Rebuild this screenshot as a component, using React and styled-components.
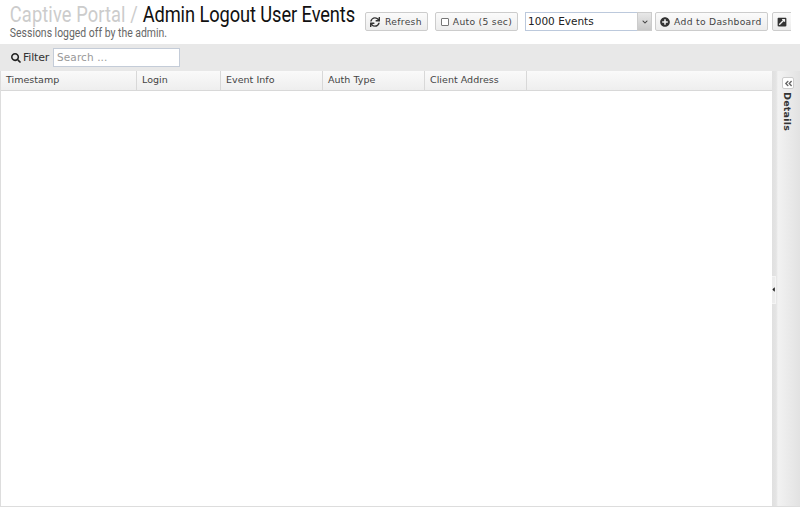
import React from "react";
import styled, { createGlobalStyle } from "styled-components";
import { FaSearch, FaSync, FaPlusCircle, FaExternalLinkSquareAlt, FaAngleDoubleLeft, FaCaretLeft, FaChevronDown } from "react-icons/fa";

const Global = createGlobalStyle`
  html, body { margin: 0; padding: 0; height: 100%; overflow: hidden; background: #fff; }
  #root { height: 100%; }
  * { box-sizing: border-box; }
`;
const Page = styled.div`
  width: 800px; height: 507px; display: flex; flex-direction: column;
  font-family: "DejaVu Sans", sans-serif; font-size: 10px; color: #333;
`;
const Header = styled.header`
  height: 44px; display: flex; justify-content: space-between; align-items: flex-start;
  padding: 0 9px 0 9px; background: #fff; flex: none;
`;
const TitleBlock = styled.div`
  display: flex; flex-direction: column; padding-top: 3px; white-space: nowrap;
`;
const Title = styled.h1`
  margin: 0; padding-left: 1px; font: 400 22px/23px "Roboto", sans-serif; color: #111; letter-spacing: -.1px;
  transform: scaleX(.83); transform-origin: left center; width: 346px;
`;
const Crumb = styled.span` color: #ccc; letter-spacing: .14px; `;
const Subtitle = styled.div`
  font: 400 12px/14px "Roboto", sans-serif; color: #666; margin-top: 0; padding-left: 1px;
  transform: scaleX(.87); transform-origin: left center;
`;
const Actions = styled.div`
  display: flex; align-items: center; margin-top: 12px; width: 426px; overflow: hidden; gap: 7px;
`;
const Button = styled.button`
  height: 19px; padding: 0 5px 0 4px; flex: none; display: inline-flex; align-items: center; gap: ${p => p.$gap || 5}px;
  background: linear-gradient(#fbfbfb, #ececec); border: 1px solid #ccc; border-radius: 2px;
  font: 400 9.2px "DejaVu Sans", sans-serif; letter-spacing: .3px; color: #444; white-space: nowrap;
  svg { font-size: 10px; color: #333; flex: none; }
`;
const IconButton = styled(Button)`
  margin-left: -3px; width: 24px;
`;
const Check = styled.span`
  width: 8px; height: 8px; margin-left: 1px; border: 1px solid #777; border-radius: 1px; background: #fff; flex: none;
`;
const Combo = styled.div`
  display: flex; height: 19px; flex: none; margin-right: -4px;
`;
const ComboInput = styled.div`
  width: 112px; border: 1px solid #bcc9dc; border-right: none; background: #fff;
  font: 400 10.5px/17px "DejaVu Sans", sans-serif; color: #222; padding-left: 2px;
`;
const ComboArrow = styled.div`
  width: 15px; background: linear-gradient(#e8e8e8, #c8c8c8); border: 1px solid #ccc;
  display: flex; align-items: center; justify-content: center;
  svg { font-size: 6px; color: #444; }
`;
const Toolbar = styled.div`
  height: 27px; flex: none; background: #e8e8e8; display: flex; align-items: center; padding: 0 0 0 11px; gap: 4px;
`;
const FilterLabel = styled.label`
  display: flex; align-items: center; gap: 2px; font: 400 11px "DejaVu Sans", sans-serif; color: #333;
  letter-spacing: -.2px;
  svg { font-size: 10px; color: #222; }
`;
const Search = styled.div`
  width: 127px; height: 19px; background: #fff; border: 1px solid #c4ccd8; padding-left: 3px;
  font: 400 10.5px/17px "DejaVu Sans", sans-serif; letter-spacing: .1px; color: #999;
`;
const Body = styled.div`
  flex: 1; display: flex; min-height: 0; border-bottom: 1px solid #ddd; border-left: 1px solid #ddd;
`;
const Grid = styled.div`
  flex: 1; min-width: 0; display: flex; flex-direction: column;
`;
const GridHead = styled.div`
  height: 20px; display: flex; flex: none; background: linear-gradient(#fafafa, #eeeeee);
  border-bottom: 1px solid #d8d8d8;
`;
const Col = styled.div`
  width: ${p => p.$w}px; flex: none; border-right: 1px solid #d8d8d8; padding-left: 5px;
  font: 400 9.5px/18px "DejaVu Sans", sans-serif; letter-spacing: .03px; color: #444;
`;
const Splitter = styled.div`
  width: 6px; flex: none; background: linear-gradient(90deg, #e0e0e0, #e4e4e4 70%, #f2f2f2);
  display: flex; align-items: center; justify-content: flex-start;
`;
const Handle = styled.div`
  width: 4px; height: 28px; margin-top: 2px; background: #ececec; border: 1px solid #f4f4f4; border-left: none;
  display: flex; align-items: center; justify-content: center;
  svg { font-size: 7px; color: #222; flex: none; }
`;
const Side = styled.aside`
  width: 22px; flex: none; background: linear-gradient(90deg, #f2f2f2, #e2e2e2);
  display: flex; flex-direction: column; align-items: center; padding: 6px 2px 0 0;
`;
const Collapse = styled.div`
  width: 12px; height: 12px; background: #fff; border: 1px solid #ccc; border-radius: 2px;
  display: flex; align-items: center; justify-content: center;
  svg { font-size: 9px; color: #666; flex: none; }
`;
const SideLabel = styled.div`
  writing-mode: vertical-rl; margin: 3px 2px 0 0; font: 700 9.5px/12px "DejaVu Sans", sans-serif;
  letter-spacing: .25px; color: #333;
`;

const cols = [["Timestamp", 136], ["Login", 84], ["Event Info", 102], ["Auth Type", 102], ["Client Address", 102]];

export default function App() {
  return (
    <Page>
      <Global />
      <Header>
        <TitleBlock>
          <Title><Crumb>Captive Portal / </Crumb>Admin Logout User Events</Title>
          <Subtitle>Sessions logged off by the admin.</Subtitle>
        </TitleBlock>
        <Actions>
          <Button><FaSync />Refresh</Button>
          <Button $gap={4}><Check />Auto (5 sec)</Button>
          <Combo>
            <ComboInput>1000 Events</ComboInput>
            <ComboArrow><FaChevronDown /></ComboArrow>
          </Combo>
          <Button $gap={4}><FaPlusCircle />Add to Dashboard</Button>
          <IconButton><FaExternalLinkSquareAlt /></IconButton>
        </Actions>
      </Header>
      <Toolbar>
        <FilterLabel><FaSearch />Filter</FilterLabel>
        <Search>Search ...</Search>
      </Toolbar>
      <Body>
        <Grid>
          <GridHead>
            {cols.map(([t, w]) => <Col key={t} $w={w}>{t}</Col>)}
          </GridHead>
        </Grid>
        <Splitter><Handle><FaCaretLeft /></Handle></Splitter>
        <Side>
          <Collapse><FaAngleDoubleLeft /></Collapse>
          <SideLabel>Details</SideLabel>
        </Side>
      </Body>
    </Page>
  );
}
